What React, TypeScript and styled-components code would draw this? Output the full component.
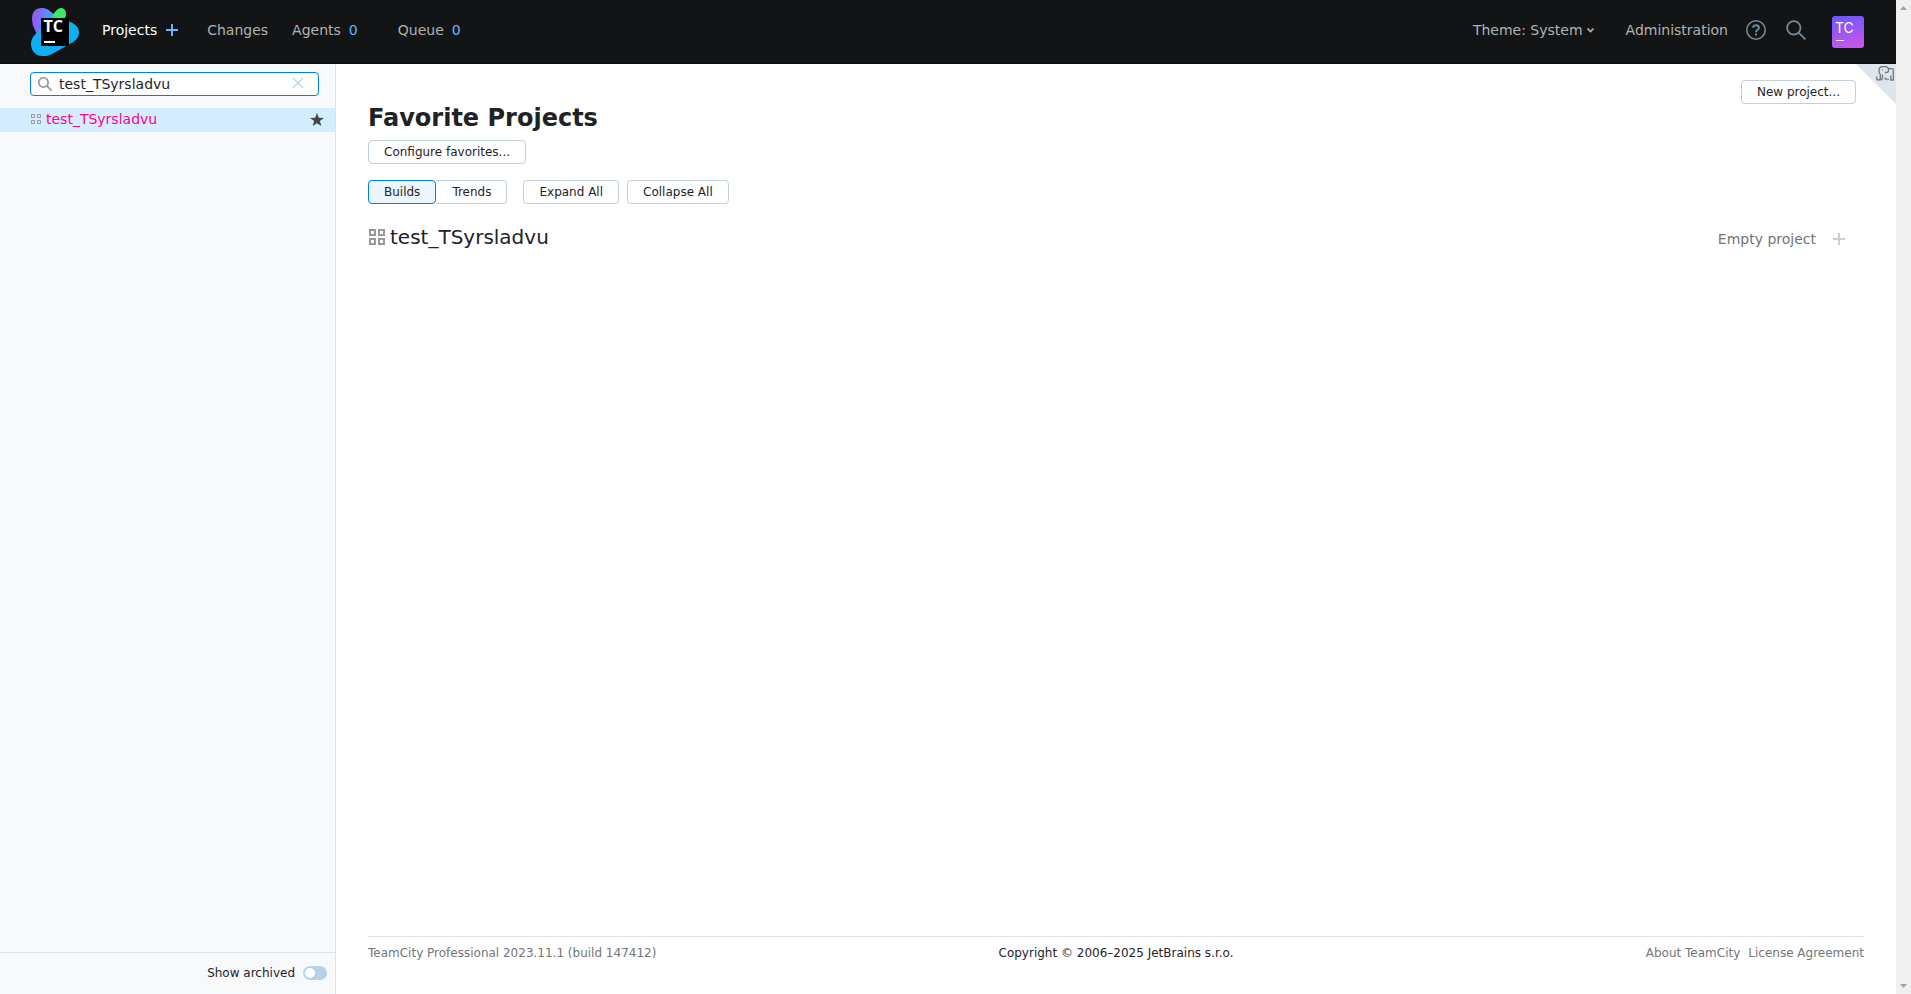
import React, { useState } from 'react';
import styled, { createGlobalStyle, css } from 'styled-components';

const GlobalStyle = createGlobalStyle`
  *, *::before, *::after { box-sizing: border-box; }
  body {
    margin: 0;
    background: #fff;
    color: #1f2326;
    font: 14px/20px "DejaVu Sans", Verdana, sans-serif;
  }
  button, input { font: inherit; color: inherit; }
  a { color: inherit; text-decoration: none; }
  svg { display: block; flex: none; }
`;

const Shell = styled.div`
  display: flex;
  min-height: 100vh;
`;

const Page = styled.div`
  display: flex;
  flex: 1;
  flex-direction: column;
  min-width: 0;
`;

const ScrollTrack = styled.div`
  display: flex;
  flex: none;
  flex-direction: column;
  align-items: center;
  justify-content: space-between;
  width: 15px;
  padding: 6px 0;
  background: #f0f0f0;
`;

const Header = styled.header`
  display: flex;
  align-items: center;
  height: 64px;
  padding: 0 32px 4px 30px;
  background: #131416;
  border-bottom: 1px solid #0b0c0d;
  color: #b2b2b2;
`;

const Logo = styled.a`
  margin-right: 22px;
  padding-top: 5px;
`;

const Nav = styled.nav`
  display: flex;
  align-items: center;
`;

const NavItem = styled.a<{ $active?: boolean; $gap: number }>`
  display: flex;
  align-items: center;
  gap: 8px;
  margin-right: ${(p) => p.$gap}px;
  color: ${(p) => (p.$active ? '#fff' : 'inherit')};
`;

const Count = styled.span`
  color: #6db2ff;
`;

const IconButton = styled.button`
  display: flex;
  align-items: center;
  justify-content: center;
  padding: 0;
  border: 0;
  background: none;
`;

const HeaderTools = styled.div`
  display: flex;
  align-items: center;
  gap: 32px;
  margin-left: auto;
`;

const IconGroup = styled.div`
  display: flex;
  align-items: center;
  gap: 20px;
  margin-left: -14px;
`;

const ThemeButton = styled(IconButton)`
  gap: 4px;
`;

const Avatar = styled(IconButton)`
  margin: 4px 0 0 6px;
  border-radius: 3px;
  overflow: hidden;
`;

const Body = styled.div`
  display: flex;
  flex: 1;
`;

const Sidebar = styled.aside`
  display: flex;
  flex: none;
  flex-direction: column;
  width: 336px;
  background: #f7f9fb;
  border-right: 1px solid #dfe1e5;
`;

const SearchBox = styled.label`
  display: flex;
  align-items: center;
  height: 24px;
  margin: 8px 16px 12px 30px;
  padding: 0 14px 0 7px;
  gap: 7px;
  border: 1px solid #0080e5;
  border-radius: 4px;
  background: #fff;
`;

const SearchInput = styled.input`
  flex: 1;
  min-width: 0;
  height: 20px;
  padding: 0;
  border: 0;
  outline: 0;
  background: none;
`;

const ProjectRow = styled.div`
  display: flex;
  align-items: center;
  height: 24px;
  padding: 0 11px 2px 31px;
  gap: 5px;
  background: #d4edff;
`;

const ProjectLink = styled.a`
  flex: 1;
  color: #ff008c;
`;

const SidebarFooter = styled.div`
  display: flex;
  justify-content: flex-end;
  height: 42px;
  margin-top: auto;
  padding: 9px 8px 11px;
  border-top: 1px solid #dae4ef;
`;

const ToggleLabel = styled.label`
  display: flex;
  align-items: center;
  gap: 8px;
  font-size: 12px;
`;

const Toggle = styled.input`
  appearance: none;
  width: 24px;
  height: 14px;
  margin: 0;
  padding: 2px 1px;
  border-radius: 7px;
  background: #b8d1e5;

  &::before {
    content: '';
    display: block;
    width: 10px;
    height: 10px;
    margin-left: 1px;
    border-radius: 50%;
    background: #fff;
  }
  &:checked { background: #008eff; }
  &:checked::before { margin-left: auto; }
`;

const Main = styled.main`
  position: relative;
  display: flex;
  flex: 1;
  flex-direction: column;
  min-width: 0;
  padding: 0 32px;
`;

const Corner = styled.button`
  position: absolute;
  top: 0;
  right: 0;
  padding: 0;
  border: 0;
  background: none;
`;

const TopBar = styled.div`
  display: flex;
  justify-content: flex-end;
  padding: 16px 8px 0;
`;

const Title = styled.h1`
  margin: -2px 0 6px;
  font-size: 24px;
  line-height: 32px;
  font-weight: 700;
`;

const Toolbar = styled.div`
  display: flex;
  gap: 8px;
  margin-bottom: 16px;
`;

const Button = styled.button<{ $active?: boolean }>`
  height: 24px;
  padding: 0 15px;
  border: 1px solid #c3d1db;
  border-radius: 4px;
  background: #fff;
  font-size: 12px;
  line-height: 20px;
  white-space: nowrap;
  ${(p) =>
    p.$active &&
    css`
      border-color: #0080e5;
      background: #ebf6ff;
    `}
`;

const ButtonGroup = styled.div`
  display: flex;
  margin-right: 8px;

  & > * + * {
    padding-left: 16px;
    border-left: 0;
    border-top-left-radius: 0;
    border-bottom-left-radius: 0;
  }
`;

const ProjectHeader = styled.section`
  display: flex;
  align-items: center;
  gap: 5px;
  padding: 5px 19px 0 1px;
`;

const ProjectName = styled.h2`
  flex: 1;
  margin: 0;
  font-size: 20px;
  line-height: 24px;
  font-weight: 400;
`;

const ProjectStatus = styled.div`
  display: flex;
  align-items: center;
  gap: 17px;
  padding-top: 4px;
  color: #737577;
`;

const Footer = styled.footer`
  display: grid;
  grid-template-columns: 1fr auto 1fr;
  height: 58px;
  margin-top: auto;
  padding-top: 6px;
  border-top: 1px solid #dae4ef;
  font-size: 12px;
`;

const Muted = styled.span`
  color: #737577;
`;

const FooterLinks = styled.nav`
  display: flex;
  justify-content: flex-end;
  gap: 8px;
  color: #737577;
`;

const LogoIcon = () => (
  <svg width="50" height="50" viewBox="0 0 50 50" aria-hidden="true">
    <defs>
      <linearGradient id="violet" x1="0" y1="0.3" x2="1" y2="0.5">
        <stop offset="0.1" stopColor="#905cfb" />
        <stop offset="0.55" stopColor="#5093fb" />
        <stop offset="1" stopColor="#1fa6f0" />
      </linearGradient>
      <linearGradient id="green" x1="0" y1="1" x2="1" y2="0">
        <stop offset="0.2" stopColor="#28c0b0" />
        <stop offset="0.5" stopColor="#3bea62" />
      </linearGradient>
    </defs>
    <path d="M12 1Q17 1 21 5L30 12V36H10Q8 29 5 23Q2 18 2 12Q2 1 12 1Z" fill="url(#violet)" />
    <path d="M39 14.500C46 17 49 21 49 25.500C49 31 45 34.500 39 37.500L22 47C18 49 15 49.300 12 49C5 49 1 43 1 37C1 31 5 28 8 24L20 14Z" fill="#0cb0f2" />
    <path d="M19 12L25 5Q28 1 31 1C34 1 36 3.500 36 7C36 9 35 11 34 13L28 18Z" fill="url(#green)" />
    <path d="M11 11h28v28h-28z" fill="#000" />
    <text x="13.500" y="25" fill="#fff" fontFamily="Open Sans, sans-serif" fontSize="16" fontWeight="700">TC</text>
    <path d="M14 34h11v2h-11z" fill="#fff" />
  </svg>
);

const PlusIcon = ({ color, size = 12 }: { color: string; size?: number }) => (
  <svg width={size} height={size} viewBox="0 0 12 12" fill={color} aria-hidden="true">
    <path d="M5 0h2v5h5v2h-5v5h-2v-5h-5v-2h5z" />
  </svg>
);

const ChevronIcon = () => (
  <svg width="7" height="7" viewBox="0 0 7 7" fill="none" stroke="#b2b2b2" strokeWidth="1.700" aria-hidden="true">
    <path d="M.500 2.500l3 3 3-3" />
  </svg>
);

const HelpIcon = () => (
  <svg width="20" height="20" viewBox="0 0 20 20" fill="none" stroke="#738a9a" aria-hidden="true">
    <circle cx="10" cy="10" r="9.200" strokeWidth="1.600" />
    <path d="M7 7.800Q7.200 5.200 10 5.200T13 7.800C13 9.800 10 9.800 10 12.200" strokeWidth="1.900" />
    <path d="M9 13.600h2v2h-2z" fill="#738a9a" stroke="none" />
  </svg>
);

const GlassIcon = ({ size, color, width }: { size: number; color: string; width: number }) => (
  <svg width={size} height={size} viewBox="0 0 20 20" fill="none" stroke={color} strokeWidth={width} aria-hidden="true">
    <circle cx="7.800" cy="7.800" r="6.700" />
    <path d="M12.600 12.600l6.800 6.800" />
  </svg>
);

const AvatarIcon = () => (
  <svg width="32" height="32" viewBox="0 0 32 32" aria-hidden="true">
    <defs>
      <linearGradient id="avatar" x1="0.400" y1="0" x2="0.600" y2="1">
        <stop offset="0" stopColor="#7256ff" />
        <stop offset="1" stopColor="#c757e8" />
      </linearGradient>
    </defs>
    <path d="M0 0h32v32h-32z" fill="url(#avatar)" />
    <text x="3" y="17" fill="#fff" fontFamily="Inter, sans-serif" fontSize="14">TC</text>
    <path d="M4 24h8v1h-8z" fill="#fff" />
  </svg>
);

const ClearIcon = () => (
  <svg width="12" height="12" viewBox="0 0 12 12" fill="none" stroke="#b8d1e5" strokeWidth="1.200" aria-hidden="true">
    <path d="M1 0l10 10M11 0L1 10" />
  </svg>
);

const SmallProjectIcon = () => (
  <svg width="10" height="10" viewBox="0 0 10 10" fill="none" stroke="#999" aria-hidden="true">
    <path d="M.5.5h3v3h-3zM6.500.5h3v3h-3zM.5 6.500h3v3h-3zM6.500 6.500h3v3h-3z" />
  </svg>
);

const ProjectIcon = () => (
  <svg width="16" height="16" viewBox="0 0 16 16" fill="none" stroke="#999" strokeWidth="2" aria-hidden="true">
    <path d="M1 1h5v5h-5zM10 1h5v5h-5zM1 10h5v5h-5zM10 10h5v5h-5z" />
  </svg>
);

const StarIcon = () => (
  <svg width="14" height="13" viewBox="0 0 14 13" fill="#45484a" aria-hidden="true">
    <path d="M7 0l1.800 4.700 5.200.2-4.100 3.200 1.400 4.900L7 10.200 2.700 13l1.400-4.900L0 4.900l5.200-.2z" />
  </svg>
);

const CornerIcon = () => (
  <svg width="40" height="40" viewBox="0 0 40 40" aria-hidden="true">
    <path d="M0 0h40v40z" fill="#dfe5ec" />
    <g fill="none" stroke="#737577" strokeWidth="1.300">
      <path d="M20.700 12.500v1.500q0 2 1.800 2t1.800-2v-3.500q-1.300-1-1.300-3.500 0-4.300 3.500-4.300h2.500q3.500 0 3.500 3v1q0 2-3.500 1.800" />
      <path d="M26.500 10.500v3q0 2-2.200 2.500" />
      <path d="M32.500 4.700h3.500q1.300 0 1.300 1.500v9.800h-2.500v-4.500" />
      <path d="M28.500 14.500h1.500v1.500M32 14.500v1.800" />
    </g>
    <path d="M26 5.500h1v1h-1z" fill="#737577" />
  </svg>
);

const ScrollArrow = ({ down }: { down?: boolean }) => (
  <svg width="7" height="4" viewBox="0 0 7 4" fill="#a3a3a3" aria-hidden="true">
    <path d={down ? 'M0 0h7l-3.500 4z' : 'M0 4h7l-3.500-4z'} />
  </svg>
);

export default function App() {
  const [query, setQuery] = useState('test_TSyrsladvu');
  const [view, setView] = useState('Builds');

  return (
    <>
      <GlobalStyle />
      <Shell>
        <Page>
          <Header>
            <Logo href="#" aria-label="TeamCity"><LogoIcon /></Logo>
            <Nav>
              <NavItem href="#" $active $gap={9}>Projects</NavItem>
              <NavItem href="#" $gap={29} aria-label="Create project"><PlusIcon color="#6db2ff" /></NavItem>
              <NavItem href="#" $gap={24}>Changes</NavItem>
              <NavItem href="#" $gap={40}>Agents <Count>0</Count></NavItem>
              <NavItem href="#" $gap={0}>Queue <Count>0</Count></NavItem>
            </Nav>
            <HeaderTools>
              <ThemeButton type="button">Theme: System<ChevronIcon /></ThemeButton>
              <a href="#">Administration</a>
              <IconGroup>
                <IconButton type="button" aria-label="Help"><HelpIcon /></IconButton>
                <IconButton type="button" aria-label="Search"><GlassIcon size={20} color="#738a9a" width={1.8} /></IconButton>
                <Avatar type="button" aria-label="User menu"><AvatarIcon /></Avatar>
              </IconGroup>
            </HeaderTools>
          </Header>
          <Body>
            <Sidebar>
              <SearchBox>
                <GlassIcon size={14} color="#999" width={2.4} />
                <SearchInput aria-label="Search projects" value={query} onChange={(e) => setQuery(e.target.value)} />
                <IconButton type="button" aria-label="Clear search" onClick={() => setQuery('')}><ClearIcon /></IconButton>
              </SearchBox>
              <ProjectRow>
                <SmallProjectIcon />
                <ProjectLink href="#">test_TSyrsladvu</ProjectLink>
                <IconButton type="button" aria-label="Remove from favorites"><StarIcon /></IconButton>
              </ProjectRow>
              <SidebarFooter>
                <ToggleLabel>Show archived<Toggle type="checkbox" /></ToggleLabel>
              </SidebarFooter>
            </Sidebar>
            <Main>
              <Corner type="button" aria-label="Switch interface"><CornerIcon /></Corner>
              <TopBar><Button type="button">New project...</Button></TopBar>
              <Title>Favorite Projects</Title>
              <Toolbar><Button type="button">Configure favorites...</Button></Toolbar>
              <Toolbar>
                <ButtonGroup>
                  {['Builds', 'Trends'].map((name) => (
                    <Button key={name} type="button" $active={view === name} onClick={() => setView(name)}>{name}</Button>
                  ))}
                </ButtonGroup>
                <Button type="button">Expand All</Button>
                <Button type="button">Collapse All</Button>
              </Toolbar>
              <ProjectHeader>
                <ProjectIcon />
                <ProjectName><a href="#">test_TSyrsladvu</a></ProjectName>
                <ProjectStatus>
                  <span>Empty project</span>
                  <IconButton type="button" aria-label="Add"><PlusIcon color="#c3d1db" /></IconButton>
                </ProjectStatus>
              </ProjectHeader>
              <Footer>
                <Muted>TeamCity Professional 2023.11.1 (build 147412)</Muted>
                <span>Copyright © 2006–2025 JetBrains s.r.o.</span>
                <FooterLinks>
                  <a href="#">About TeamCity</a>
                  <a href="#">License Agreement</a>
                </FooterLinks>
              </Footer>
            </Main>
          </Body>
        </Page>
        <ScrollTrack>
          <ScrollArrow />
          <ScrollArrow down />
        </ScrollTrack>
      </Shell>
    </>
  );
}
